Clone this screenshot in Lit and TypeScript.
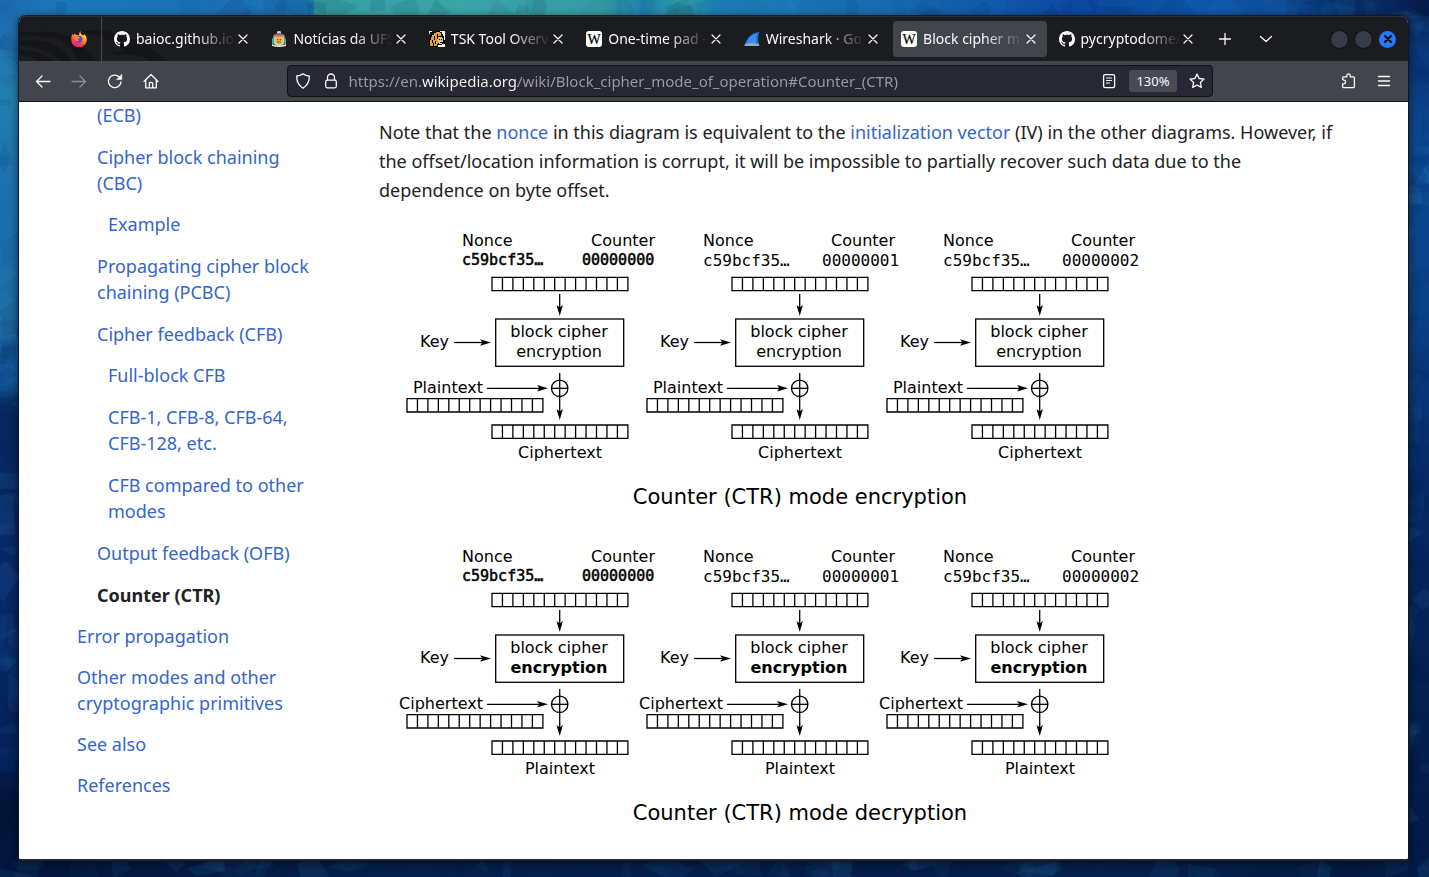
import { LitElement, html, svg, css, nothing } from "lit";
import { customElement, property } from "lit/decorators.js";
import { classMap } from "lit/directives/class-map.js";

/* ---------- icons ---------- */

const icon = (body: unknown, box = 16, size = box) => html`
  <svg width=${size} height=${size} viewBox="0 0 ${box} ${box}" fill="none" stroke="currentColor"
    stroke-width="1.3" stroke-linecap="round" stroke-linejoin="round" aria-hidden="true">${body}</svg>`;

const github = svg`<path fill="#fbfbfe" stroke="none" fill-rule="evenodd" d="M8 0C3.58 0 0 3.58 0 8c0 3.54 2.29 6.53 5.47 7.59.4.07.55-.17.55-.38 0-.19-.01-.82-.01-1.49-2.01.37-2.53-.49-2.69-.94-.09-.23-.48-.94-.82-1.13-.28-.15-.68-.52-.01-.53.63-.01 1.08.58 1.23.82.72 1.21 1.87.87 2.33.66.07-.52.28-.87.51-1.07-1.78-.2-3.64-.89-3.64-3.95 0-.87.31-1.59.82-2.15-.08-.2-.36-1.02.08-2.12 0 0 .67-.21 2.2.82.64-.18 1.32-.27 2-.27s1.36.09 2 .27c1.53-1.04 2.2-.82 2.2-.82.44 1.1.16 1.92.08 2.12.51.56.82 1.27.82 2.15 0 3.07-1.87 3.75-3.65 3.95.29.25.54.73.54 1.48 0 1.07-.01 1.93-.01 2.2 0 .21.15.46.55.38A8.01 8.01 0 0 0 16 8c0-4.42-3.58-8-8-8z"/>`;

const wikipedia = svg`<rect width="16" height="16" rx="3" fill="#fff" stroke="none"/>
  <text x="8" y="13" text-anchor="middle" font-family="Liberation Serif, serif" font-size="14" fill="#000" stroke="#000" stroke-width="0.2">W</text>`;

const crest = svg`<g stroke="none">
  <path d="M6 0.6 8 0l2 .6v2H6z" fill="#c8d8e8"/>
  <path d="M2 4.5Q8 0 14 4.5l-1 2H3z" fill="#e2584d"/>
  <path d="M2.5 5.5h11V11q0 3-5.5 4.6Q2.5 14 2.5 11z" fill="#9fe0c0"/>
  <path d="M4.6 6.2h6.8v4.6q0 2-3.4 2.6-3.4-.6-3.4-2.6z" fill="#f4b52c"/>
  <path d="M6 8h1.4v1.3H6zM8.8 8h1.4v1.3H8.8zM6 10.6h4v1H6z" fill="#a8402a"/>
  <path d="M1 7.5 2.5 7v6L1 14zM15 7.5 13.5 7v6l1.5 1z" fill="#5aa9a4"/>
  <path d="M1 13.2q7 2.600 14 0V15q-7 2-14 0z" fill="#e9e4d4"/>
  <path d="M6.5 2.4h3v1.8h-3z" fill="#4a86c8"/></g>`;

const sleuth = svg`<g stroke="none" shape-rendering="crispEdges">
  <path d="M3 2h2V1h2V0h5v1h1v2h1v2h1v4h1v4h-1v1h-4v1H9v1H1v-1H0V9h1V5h1V3h1z" fill="#000"/>
  <path d="M11 0h5v9h-1V5h-1V3h-1V1h-2z" fill="#fff"/>
  <path d="M5 2h2V1h4v1h1v3H9v8H8v2H5v-3H4v3H1V9h1V6h1V4h2z" fill="#dfa21c"/>
  <path d="M9 6h4v1h1v4h-1v2h-3v-1H9z" fill="#dcc0a6"/>
  <path d="M10 8h1v1h-1zM12 8h1v1h-1zM11 11h2v1h-2zM5 5h1v4H5zM8 3h1v5H8zM3 9h1v3H3zM6 10h1v3H6z" fill="#000"/>
  <path d="M9 14h4v-1h3v3H9zM0 0h3v1H1v2H0z" fill="#fff"/></g>`;

const shark = svg`<g stroke="none"><path d="M.5 15Q2.5 3.5 15.5.5 12.8 7 15 13.5v1.5z" fill="#1a67d8"/>
  <path d="M2.8 12Q4.500 4.500 13.5 2q-2 4.500-1 10z" fill="#3b8cf5"/>
  <path d="M.5 15 1 12.8q7-1.500 14.2.3V15z" fill="#9aa9c2"/></g>`;

const firefox = svg`<defs><linearGradient id="fx" x1="0.8" y1="0.05" x2="0.3" y2="1">
    <stop offset="0" stop-color="#fff04a"/><stop offset=".35" stop-color="#ffab28"/><stop offset=".65" stop-color="#ff4a3d"/><stop offset="1" stop-color="#e31587"/></linearGradient></defs>
  <g stroke="none"><path fill="url(#fx)" d="M9.7 0c-.6 1.8.2 2.8 1.2 3.7.8-.2 1.3.3 1.7.8l.6-1.2c1.8 1.5 2.8 3.3 2.6 5.6A7.8 7.8 0 0 1 .2 8.300C.1 6 .9 4.200 1.8 2.800l.6 1.6L4 2.200l.8 1.9c1.5-.2 2.6-.1 3.4.4C8 2.700 8.500 1.200 9.700 0z"/>
  <circle cx="8" cy="8.3" r="3.5" fill="#6e41d8"/>
  <path fill="#ff8a24" d="M3.6 6.3c1-1 2.6-.9 3.7-.5l1.6.7c-.3 1-1.5 1.3-2 1.5-.4.9.3 1.6 1.4 1.6-1.2 1.2-3.4.5-4.7-1.4z"/></g>`;

const cross = svg`<path d="m4 4 8 8M12 4l-8 8" stroke-width="1.2"/>`;
const back = svg`<path d="M15 8.500H1.500M7 3 1.500 8.500 7 14"/>`;
const forward = svg`<path d="M1 8.500h13.500M9 3l5.500 5.500L9 14"/>`;
const reload = svg`<path d="M14 9a6.300 6.300 0 1 1-1.900-5.200"/><path d="M14.800 1.500v5H9.800z" fill="currentColor" stroke-width=".5"/>`;
const home = svg`<path d="m1 8.500 7-7 7 7M2.700 7.200v7.600h10.600V7.200M6.300 14.800v-4.300q0-1 1-1h1.400q1 0 1 1v4.300"/>`;
const shield = svg`<path d="M8 .8q2.500 2 6.200 2.200.6 7.500-6.200 12.200Q1.200 10.500 1.800 3 5.500 2.800 8 .8z"/>`;
const lock = svg`<rect x="2.700" y="7.200" width="10.600" height="7.600" rx="1.500"/><path d="M4.500 7V4.500a3.500 3.500 0 0 1 7 0V7"/>`;
const reader = svg`<rect x="2.600" y="1.600" width="11" height="13" rx="1.600"/><path d="M5.500 5h5M5.500 7.500h5M5.500 10h3" stroke-width="1.200"/>`;
const star = svg`<path d="m8 1 2.100 4.500 4.900.6-3.600 3.400.9 4.900L8 12l-4.300 2.400.9-4.900L1 6.100l4.900-.6z"/>`;
const puzzle = svg`<path d="M2.600 6.200V4.800q0-1 1-1h3.200V2.600a1.700 1.700 0 0 1 3.400 0v1.200h3.200q1 0 1 1v8.800q0 1-1 1H3.600q-1 0-1-1v-2.800h1.200a1.800 1.800 0 0 0 0-3.600z"/>`;
const menu = svg`<path d="M2.500 3.500h11M2.500 8h11M2.500 12.500h11" stroke-width="1.400"/>`;
const plus = svg`<path d="M8 2.500v11M2.500 8h11"/>`;
const chevron = svg`<path d="m2.500 5.500 5.500 5 5.500-5"/>`;

/* ---------- data ---------- */

interface Tab { title: string; art: unknown; active?: boolean; }
const tabs: Tab[] = [
  { title: "baioc.github.io/", art: github },
  { title: "Notícias da UFSC", art: crest },
  { title: "TSK Tool Overview", art: sleuth },
  { title: "One-time pad - Wi", art: wikipedia },
  { title: "Wireshark · Go De", art: shark },
  { title: "Block cipher mode", art: wikipedia, active: true },
  { title: "pycryptodome/lib", art: github },
];

interface Entry { label: string; current?: boolean; children?: Entry[]; }
const contents: Entry[] = [
  { label: "(ECB)" },
  { label: "Cipher block chaining (CBC)", children: [{ label: "Example" }] },
  { label: "Propagating cipher block chaining (PCBC)" },
  {
    label: "Cipher feedback (CFB)",
    children: [
      { label: "Full-block CFB" },
      { label: "CFB-1, CFB-8, CFB-64, CFB-128, etc." },
      { label: "CFB compared to other modes" },
    ],
  },
  { label: "Output feedback (OFB)" },
  { label: "Counter (CTR)", current: true },
];
const topLevel: Entry[] = [
  { label: "Error propagation" },
  { label: "Other modes and other cryptographic primitives" },
  { label: "See also" },
  { label: "References" },
];

/* ---------- wallpaper ---------- */

@customElement("desk-wallpaper")
export class DeskWallpaper extends LitElement {
  static styles = css`
    :host { display: block; }
    svg { display: block; width: 100%; height: 100%; }
  `;

  /** Angular brush strokes, repeatable from a fixed seed. */
  private strokes() {
    let seed = 11;
    const rnd = () => (seed = (seed * 16807) % 2147483647) / 2147483647;
    const out = [];
    for (let i = 0; i < 260; i++) {
      const edge = i % 4;
      const t = rnd();
      const x = edge === 1 ? rnd() * 20 : edge === 2 ? 1405 + rnd() * 24 : t * 1429;
      const y = edge === 0 ? rnd() * 16 : edge === 3 ? 862 + rnd() * 15 : t * 877;
      const w = 10 + rnd() * 45;
      const h = 10 + rnd() * 40;
      const a = rnd() * Math.PI * 2;
      const pts = [0, 1.3, 2.7, 4.2]
        .map((s) => {
          const q = a + s + rnd() * 0.8;
          return `${(x + (Math.cos(q) * w) / 2).toFixed(1)},${(y + (Math.sin(q) * h) / 2).toFixed(1)}`;
        })
        .join(" ");
      out.push(svg`<polygon points=${pts} fill=${rnd() > 0.5 ? "#3a9fd8" : "#021440"} opacity=${(0.03 + rnd() * 0.08).toFixed(3)}/>`);
    }
    return out;
  }

  render() {
    return html`<svg viewBox="0 0 1429 877" preserveAspectRatio="none" aria-hidden="true">
      <defs>
        <linearGradient id="top">
          <stop offset="0" stop-color="#1c68ae"/><stop offset=".05" stop-color="#1b78b8"/><stop offset=".15" stop-color="#1a6fb3"/>
          <stop offset=".219" stop-color="#1e7ab6"/><stop offset=".22" stop-color="#35a0a3"/><stop offset=".32" stop-color="#3ba5a4"/>
          <stop offset=".42" stop-color="#349ca5"/><stop offset=".45" stop-color="#1f83ae"/><stop offset=".48" stop-color="#2f9aa7"/>
          <stop offset=".5" stop-color="#1c7cb2"/><stop offset=".63" stop-color="#1767ae"/><stop offset=".74" stop-color="#0c4ca2"/>
          <stop offset=".78" stop-color="#0b479b"/><stop offset=".83" stop-color="#0f58ac"/><stop offset=".9" stop-color="#0c4a98"/>
          <stop offset=".94" stop-color="#072f6b"/><stop offset="1" stop-color="#061d49"/>
        </linearGradient>
        <linearGradient id="left" x2="0" y2="1">
          <stop offset="0" stop-color="#1c68ae"/><stop offset=".1" stop-color="#217fad"/><stop offset=".24" stop-color="#1a6fae"/>
          <stop offset=".37" stop-color="#1e70a4"/><stop offset=".44" stop-color="#0f4f94"/><stop offset=".47" stop-color="#08295f"/>
          <stop offset=".7" stop-color="#062868"/><stop offset=".87" stop-color="#052258"/><stop offset=".93" stop-color="#031538"/><stop offset="1" stop-color="#03163c"/>
        </linearGradient>
        <linearGradient id="right" x2="0" y2="1">
          <stop offset="0" stop-color="#061d49"/><stop offset=".06" stop-color="#093a7c"/><stop offset=".16" stop-color="#0b4890"/>
          <stop offset=".35" stop-color="#0a4288"/><stop offset=".55" stop-color="#062a66"/><stop offset=".8" stop-color="#04204f"/><stop offset="1" stop-color="#031b46"/>
        </linearGradient>
        <linearGradient id="bottom">
          <stop offset="0" stop-color="#03163c"/><stop offset=".3" stop-color="#042050"/><stop offset=".6" stop-color="#031c4a"/>
          <stop offset=".75" stop-color="#04204f"/><stop offset="1" stop-color="#031b46"/>
        </linearGradient>
      </defs>
      <rect width="1429" height="877" fill="url(#bottom)"/>
      <rect width="700" height="864" fill="url(#left)"/>
      <rect x="700" width="729" height="864" fill="url(#right)"/>
      <rect y="862" width="1429" height="15" fill="url(#bottom)"/>
      <rect width="1429" height="16" fill="url(#top)"/>
      ${this.strokes()}
    </svg>`;
  }
}

/* ---------- browser chrome ---------- */

@customElement("tab-strip")
export class TabStrip extends LitElement {
  static styles = css`
    :host {
      position: relative; display: flex; align-items: center; height: 45px; box-sizing: border-box;
      color: #fbfbfe; background: #1b1c20; border-top: 1px solid #2a2d33;
      font: 14px/20px "Noto Sans", sans-serif;
    }
    button { all: unset; box-sizing: border-box; display: flex; align-items: center; justify-content: center; cursor: default; }
    svg { display: block; flex: none; }
    .emblem { position: absolute; left: 0; bottom: 0; }
    .pinned { width: 83px; height: 44px; padding-left: 37px; border-right: 1px solid #4a4b50; position: relative; flex: none; }
    .tabs { position: relative; display: flex; gap: 4px; flex: 0 1 1098px; min-width: 0; margin-left: 4px; }
    .tab { display: flex; align-items: center; flex: 1 1 0; min-width: 0; height: 36px; padding: 0 8px; border-radius: 4px; box-sizing: border-box; }
    .active { background: #43454c; }
    .select { flex: 1 1 0; min-width: 0; justify-content: flex-start; gap: 6px; }
    .title {
      flex: 1 1 0; min-width: 0; overflow: hidden; white-space: nowrap;
      mask-image: linear-gradient(to left, transparent, #000 40px);
      -webkit-mask-image: linear-gradient(to left, transparent, #000 40px);
    }
    .close { width: 16px; height: 16px; flex: none; }
    .tool { width: 41px; height: 36px; flex: none; }
    .tools { display: flex; }
    .window { display: flex; gap: 7px; margin-left: auto; padding-right: 12px; }
    .dot { width: 17px; height: 17px; border-radius: 50%; background: #363c49; box-shadow: 0 0 0 1px #0f1013; }
    .quit { background: #2777ff; color: #10131a; box-shadow: none; }
  `;

  render() {
    return html`
      <svg class="emblem" width="160" height="34" viewBox="0 0 160 34" aria-hidden="true">
        <g fill="#141518"><path d="M0 6Q30 2 48 8q16 8 22 18 5 6 12 8H58Q52 18 40 12 20 8 0 8z"/>
          <path d="M0 14q28-2 40 6 8 6 12 14H40Q30 20 0 18zM0 24q20-2 34 10H20Q12 28 0 27z"/>
          <path d="M66 4q26-4 40 8 20 0 26 10 10 4 14 12h-16q-10-8-26-6-10 0-14-6 8 4 14 2Q92 10 66 6z"/></g>
      </svg>
      <button class="pinned" aria-label="Pinned tab">${icon(firefox)}</button>
      <div class="tabs" role="tablist">
        ${tabs.map((t) => html`
          <div class=${classMap({ tab: true, active: !!t.active })}>
            <button class="select" role="tab" aria-selected=${t.active ? "true" : "false"}>${icon(t.art)}<span class="title">${t.title}</span></button>
            <button class="close" aria-label="Close tab">${icon(cross)}</button>
          </div>`)}
      </div>
      <div class="tools">
        <button class="tool" aria-label="New tab">${icon(plus)}</button>
        <button class="tool" aria-label="List all tabs">${icon(chevron)}</button>
      </div>
      <div class="window">
        <button class="dot" aria-label="Minimize"></button>
        <button class="dot" aria-label="Maximize"></button>
        <button class="dot quit" aria-label="Close">${icon(svg`<path d="m5 5 6 6M11 5l-6 6" stroke-width="2.200"/>`)}</button>
      </div>`;
  }
}

@customElement("nav-bar")
export class NavBar extends LitElement {
  static styles = css`
    :host {
      display: flex; align-items: center; height: 41px; box-sizing: border-box; padding: 0 6px;
      color: #fbfbfe; background: #43454c; border-bottom: 1px solid #101116;
    }
    button { all: unset; box-sizing: border-box; display: flex; align-items: center; justify-content: center; flex: none; cursor: default; }
    svg { display: block; }
    .tool { width: 36px; height: 36px; }
    .off { opacity: 0.4; }
    .spring { flex: 118 1 0; }
    .url {
      display: flex; align-items: center; flex: 926 1 0; min-width: 0; height: 32px; box-sizing: border-box;
      background: #272833; border: 1px solid #0f1014; border-radius: 4px; padding: 0 1px;
    }
    .slot { width: 24px; height: 24px; margin: 0 2px; }
    .address {
      flex: 1 1 0; min-width: 0; border: 0; padding: 0; margin-left: 4px; outline: 0; height: 22px;
      font: 15px/22px "Noto Sans", sans-serif; color: transparent;
      background: linear-gradient(to right, #9c9ca3 73px, #fbfbfe 73px, #fbfbfe 169px, #9c9ca3 169px);
      -webkit-background-clip: text; background-clip: text;
    }
    .zoom { height: 22px; padding: 0 7px; margin: 0 6px; border-radius: 3px; background: #484a55; font: 13px/22px "Noto Sans", sans-serif; }
  `;

  render() {
    return html`
      <button class="tool" aria-label="Back">${icon(back)}</button>
      <button class="tool off" aria-label="Forward">${icon(forward)}</button>
      <button class="tool" aria-label="Reload">${icon(reload)}</button>
      <button class="tool" aria-label="Home">${icon(home)}</button>
      <span class="spring"></span>
      <div class="url">
        <button class="slot" aria-label="Tracking protection">${icon(shield)}</button>
        <button class="slot" aria-label="Connection">${icon(lock)}</button>
        <input class="address" type="text" aria-label="Address" spellcheck="false"
          .value=${"https://en.wikipedia.org/wiki/Block_cipher_mode_of_operation#Counter_(CTR)"} />
        <button class="slot" aria-label="Reader view">${icon(reader)}</button>
        <button class="zoom">130%</button>
        <button class="slot" aria-label="Bookmark">${icon(star)}</button>
      </div>
      <span class="spring"></span>
      <button class="tool" aria-label="Extensions">${icon(puzzle)}</button>
      <button class="tool" aria-label="Menu">${icon(menu)}</button>`;
  }
}

/* ---------- article ---------- */

@customElement("toc-list")
export class TocList extends LitElement {
  static styles = css`
    :host { display: block; font: 18px/26px "Noto Sans", sans-serif; }
    ul { list-style: none; margin: 0; padding: 0; display: flex; flex-direction: column; gap: 16px; }
    .first { gap: 15px; }
    .second { padding-left: 20px; }
    .third { margin-top: 15px; padding-left: 11px; }
    a { display: block; color: #3366cc; text-decoration: none; }
    .current { color: #202122; font-weight: 700; }
  `;

  private entry(e: Entry): unknown {
    return html`<li>
      <a class=${classMap({ current: !!e.current })} href="#">${e.label}</a>
      ${e.children ? html`<ul class="third">${e.children.map((c) => this.entry(c))}</ul>` : nothing}
    </li>`;
  }

  render() {
    return html`<nav aria-label="Contents"><ul class="first">
      <li><ul class="second">${contents.map((e) => this.entry(e))}</ul></li>
      ${topLevel.map((e) => this.entry(e))}
    </ul></nav>`;
  }
}

@customElement("ctr-diagram")
export class CtrDiagram extends LitElement {
  @property({ type: Boolean }) decrypt = false;

  static styles = css`
    :host { display: block; }
    svg { display: block; max-width: 100%; }
    text { font: 16px "DejaVu Sans", sans-serif; fill: #000; }
    .mono { font-family: "DejaVu Sans Mono", monospace; }
    .first { font-size: 15px; stroke: #000; stroke-width: 0.5; }
    .strong { font-weight: 700; }
    .caption { font-size: 21px; }
    .line { fill: none; stroke: #000; stroke-width: 1.3; }
    .mid { text-anchor: middle; }
    .end { text-anchor: end; }
  `;

  private register(x: number, y: number) {
    const bars = Array.from({ length: 12 }, (_, i) => `M${x + (i + 1) * 10.45} ${y}v13.3`).join("");
    return svg`<path class="line" d="M${x} ${y}h135.9v13.3h-135.9z${bars}"/>`;
  }

  private down(x: number, y: number, from: number) {
    return svg`<path class="line" d="M${x} ${from}V${y - 6}"/><path d="M${x} ${y}l-3.2-11 3.2 2.4 3.2-2.4z"/>`;
  }

  private across(x: number, y: number, from: number) {
    return svg`<path class="line" d="M${from} ${y}H${x - 6}"/><path d="M${x} ${y}l-11-3.2 2.4 3.2-2.4 3.2z"/>`;
  }

  private stage(i: number) {
    const x = i * 240;
    const initial = i === 0;
    const mono = initial ? "mono first" : "mono";
    const labelX = x + (initial ? 83 : 84);
    const input = this.decrypt ? "Ciphertext" : "Plaintext";
    const output = this.decrypt ? "Plaintext" : "Ciphertext";
    return svg`
      <text x=${labelX} y="26">Nonce</text>
      <text x=${x + 276} y="26" class="end">Counter</text>
      <text x=${labelX} y=${initial ? 45 : 46} class=${mono}>c59bcf35…</text>
      <text x=${x + 203} y=${initial ? 45 : 46} class=${mono}>0000000${i}</text>
      ${this.register(x + 113, 57.4)}
      ${this.down(x + 180.7, 96, 74)}
      <rect class="line" x=${x + 116.7} y="99" width="128" height="47.3"/>
      <text x=${x + 180} y="117" class="mid">block cipher</text>
      <text x=${x + 180} y="137" class=${this.decrypt ? "mid strong" : "mid"}>encryption</text>
      <text x=${x + 41} y="127">Key</text>
      ${this.across(x + 112, 122.5, x + 75)}
      <text x=${x + 104} y="173" class="end">${input}</text>
      ${this.across(x + 169, 168.3, x + 108)}
      <circle class="line" cx=${x + 180.7} cy="168.3" r="8.2"/>
      <path class="line" d="M${x + 172.5} 168.3h16.4"/>
      ${this.down(x + 180.7, 200, 153)}
      ${this.register(x + 28, 178.7)}
      ${this.register(x + 113, 205)}
      <text x=${x + 181} y="238" class="mid">${output}</text>`;
  }

  render() {
    const caption = `Counter (CTR) mode ${this.decrypt ? "decryption" : "encryption"}`;
    return html`<svg width="781" height="300" viewBox="0 0 781 300" role="img" aria-label=${caption}>
      ${[0, 1, 2].map((i) => this.stage(i))}
      <text x="421" y="284" class="mid caption">${caption}</text>
    </svg>`;
  }
}

@customElement("app-root")
export class AppRoot extends LitElement {
  static styles = css`
    :host { display: block; position: relative; height: 100vh; min-height: 600px; box-sizing: border-box; padding: 15px 20px 16px 18px; overflow: hidden; }
    .wallpaper { position: absolute; inset: 0; }
    .frame {
      position: relative; height: 100%; box-sizing: border-box; display: flex; flex-direction: column; overflow: hidden;
      border: 1px solid #14171d; border-bottom: 2px solid #22252c; border-radius: 8px 8px 3px 3px;
      box-shadow: 0 2px 8px rgba(0, 0, 0, 0.55); background: #fff;
    }
    .page { flex: 1 1 0; min-height: 0; overflow: hidden; display: grid; grid-template-columns: 239px minmax(0, 1fr); column-gap: 63px; padding: 0 58px; }
    .article { padding-top: 16px; color: #202122; font: 18px/29px "Noto Sans", sans-serif; }
    .note { margin: 0 0 15px; }
    .note a { color: #3366cc; text-decoration: none; }
    .figures { display: flex; flex-direction: column; gap: 16px; }
  `;

  render() {
    return html`
      <desk-wallpaper class="wallpaper"></desk-wallpaper>
      <div class="frame">
        <tab-strip></tab-strip>
        <nav-bar></nav-bar>
        <div class="page">
          <toc-list></toc-list>
          <main class="article">
            <p class="note">Note that the <a href="#">nonce</a> in this diagram is equivalent to the <a href="#">initialization vector</a> (IV) in the other diagrams. However, if the offset/location information is corrupt, it will be impossible to partially recover such data due to the dependence on byte offset.</p>
            <div class="figures">
              <ctr-diagram></ctr-diagram>
              <ctr-diagram decrypt></ctr-diagram>
            </div>
          </main>
        </div>
      </div>`;
  }
}
